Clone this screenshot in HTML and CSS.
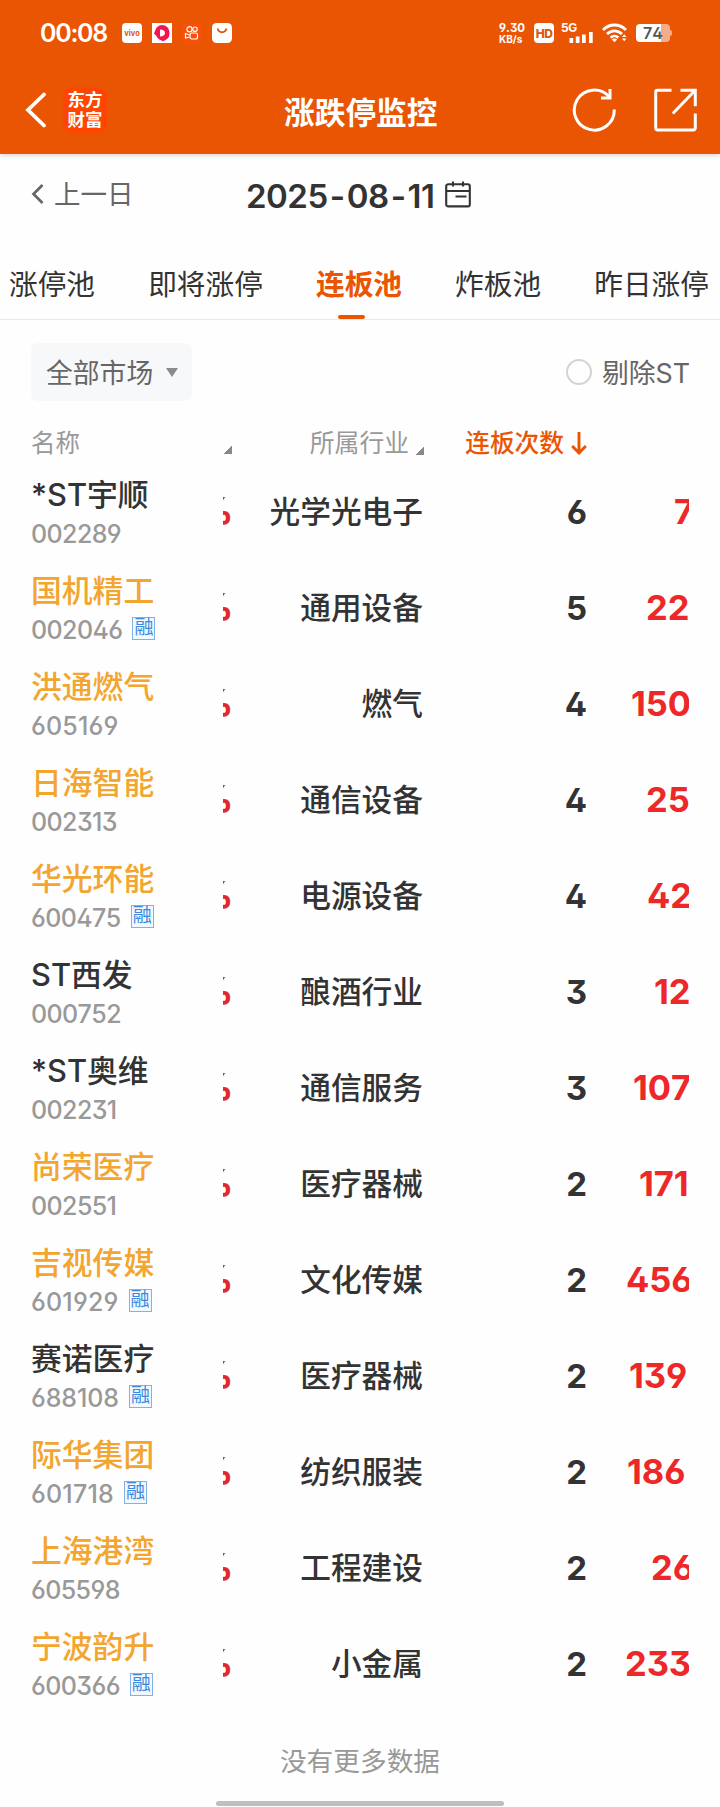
FILE: index.html
```html
<!DOCTYPE html>
<html lang="zh-CN">
<head>
<meta charset="utf-8">
<title>涨跌停监控</title>
<link rel="stylesheet" href="styles.css">
</head>
<body>
<header class="top">
  <div class="status">
    <span class="clock">00:08</span>
    <span class="chip vivo">vivo</span>
    <svg class="app" viewBox="0 0 20 20"><path fill="#fff" d="M0 0h20v20H0z"/><path fill="#f5144e" d="M10 2a8 8 0 0 1 3 15.200L10.500 18.500 10 17.500A8 8 0 0 1 4.500 13L2 10.500 3 8A8 8 0 0 1 10 2z"/><path fill="#fff" d="M8 6.500c3 0 5 1.500 5 3.500s-2 3.500-5 3.500z"/></svg>
    <svg class="app" viewBox="0 0 20 20"><rect width="20" height="20" rx="4" fill="#f94f08"/><g fill="none" stroke="#fff" stroke-width="1.200"><circle cx="7.500" cy="6.200" r="2.600"/><circle cx="13" cy="6.200" r="2.200"/><rect x="8" y="10" width="7.500" height="6" rx="2"/><path d="M7.500 12 3.500 10.500v4.500L7.500 14"/></g></svg>
    <svg class="app" viewBox="0 0 20 20"><rect width="20" height="20" rx="4.500" fill="#fff"/><path d="M5.500 5.500c1.500 5 7.500 5 9 0" fill="none" stroke="#d9570f" stroke-width="1.800"/></svg>
    <span class="speed"><span>9.30</span><span>KB/s</span></span>
    <span class="chip hd">HD</span>
    <span class="signal"><span class="net">5G</span><svg width="33" height="20" viewBox="0 0 33 20"><path fill="#fff" d="M8.500 15h3.700v5H8.500zM14.800 13.500h3.700V20h-3.700zM21 11.500h3.700V20H21zM28 9h3.700v11H28z"/></svg></span>
    <svg class="wifi" width="25" height="20" viewBox="0 0 25 20"><g fill="none" stroke="#fff" stroke-width="2.800"><path d="M1 7c6.500-6.700 16.500-6.700 23 0"/><path d="M5 11c4.500-4.300 10.500-4.300 15 0"/><path d="M8.700 14.600c2.200-2 5.400-2 7.600 0"/></g><path fill="#fff" d="m9.800 16.500 2.700 2.700 2.700-2.700q-2.700-2-5.400 0zM20 14l2.200-2.700 2.200 2.700zM20 15.500h4.400l-2.200 2.700z"/></svg>
    <span class="battery"><span class="cell">74</span></span>
  </div>
  <div class="nav">
    <svg class="back" width="22" height="36" viewBox="0 0 22 36"><path d="M20 2.500 4 18 20 33.500" fill="none" stroke="#fff" stroke-width="3.800" stroke-linecap="round"/></svg>
    <div class="brand"><span>东方</span><span>财富</span></div>
    <h1 class="title">涨跌停监控</h1>
    <svg class="refresh" width="44" height="44" viewBox="0 0 44 44"><path d="M42.300 21.500A20 20 0 1 1 37 8.500" fill="none" stroke="#fff" stroke-width="3"/><path d="M38 1v9h-9" fill="none" stroke="#fff" stroke-width="3"/></svg>
    <svg class="share" width="44" height="44" viewBox="0 0 44 44"><path d="M17.500 2.300H3.500a1.800 1.800 0 0 0-1.800 1.800v36a1.800 1.800 0 0 0 1.800 1.800h36a1.800 1.800 0 0 0 1.800-1.800V25.500M26.500 2.300h14.800v16M41 2.500 18.800 25.500" fill="none" stroke="#fff" stroke-width="3"/></svg>
  </div>
</header>

<div class="datebar">
  <span class="prev"><svg width="13" height="20" viewBox="0 0 13 20"><path d="M11.500 1 2.500 10l9 9" fill="none" stroke="#666" stroke-width="2.700"/></svg>上一日</span>
  <span class="date">2025<i>-</i>08<i>-</i>11</span>
  <svg class="cal" width="26" height="27" viewBox="0 0 26 27"><g fill="none" stroke="#333" stroke-width="2.100"><rect x="1.200" y="3.200" width="23.600" height="22.200" rx="2"/><path d="M1 10h24M10.500 15.500h11"/><path d="M8 .5v5M18 .5v5"/></g></svg>
</div>

<nav class="tabs">
  <span class="tab">涨停池</span>
  <span class="tab">即将涨停</span>
  <span class="tab active">连板池</span>
  <span class="tab">炸板池</span>
  <span class="tab">昨日涨停</span>
</nav>

<div class="filters">
  <span class="market"><span>全部市场</span><svg width="12" height="9" viewBox="0 0 12 9"><path d="M0 0h12L6 9z" fill="#8b8b8b"/></svg></span>
  <span class="exclude"><span class="radio"></span><span>剔除ST</span></span>
</div>

<main>
  <div class="row head">
    <span>名称</span>
    <span class="sort"></span>
    <span class="ind">所属行业<span class="sort"></span></span>
    <span class="cnt">连板次数<svg width="16" height="23" viewBox="0 0 16 23"><path d="M8 0v20M1.200 14 8 21l6.800-7" fill="none" stroke="#ea5504" stroke-width="2.900"/></svg></span>
  </div>
  <div class="row"><div class="stock"><b>*ST宇顺</b><span class="code">002289</span></div><span class="pct"><i>%</i></span><span class="ind">光学光电子</span><span class="cnt">6</span><span class="amt" style="padding-left:88px">7</span></div>
  <div class="row"><div class="stock hot"><b>国机精工</b><span class="code">002046<em>融</em></span></div><span class="pct"><i>%</i></span><span class="ind">通用设备</span><span class="cnt">5</span><span class="amt" style="padding-left:60px">22</span></div>
  <div class="row"><div class="stock hot"><b>洪通燃气</b><span class="code wide">605169</span></div><span class="pct"><i>%</i></span><span class="ind">燃气</span><span class="cnt">4</span><span class="amt" style="padding-left:45px">150</span></div>
  <div class="row"><div class="stock hot"><b>日海智能</b><span class="code">002313</span></div><span class="pct"><i>%</i></span><span class="ind">通信设备</span><span class="cnt">4</span><span class="amt" style="padding-left:60px">25</span></div>
  <div class="row"><div class="stock hot"><b>华光环能</b><span class="code">600475<em>融</em></span></div><span class="pct"><i>%</i></span><span class="ind">电源设备</span><span class="cnt">4</span><span class="amt" style="padding-left:61px">42</span></div>
  <div class="row"><div class="stock"><b>ST西发</b><span class="code">000752</span></div><span class="pct"><i>%</i></span><span class="ind">酿酒行业</span><span class="cnt">3</span><span class="amt" style="padding-left:68px">12</span></div>
  <div class="row"><div class="stock"><b>*ST奥维</b><span class="code">002231</span></div><span class="pct"><i>%</i></span><span class="ind">通信服务</span><span class="cnt">3</span><span class="amt" style="padding-left:47px">107</span></div>
  <div class="row"><div class="stock hot"><b>尚荣医疗</b><span class="code">002551</span></div><span class="pct"><i>%</i></span><span class="ind">医疗器械</span><span class="cnt">2</span><span class="amt" style="padding-left:53px">171</span></div>
  <div class="row"><div class="stock hot"><b>吉视传媒</b><span class="code wide">601929<em>融</em></span></div><span class="pct"><i>%</i></span><span class="ind">文化传媒</span><span class="cnt">2</span><span class="amt" style="padding-left:40px">456</span></div>
  <div class="row"><div class="stock"><b>赛诺医疗</b><span class="code mid">688108<em>融</em></span></div><span class="pct"><i>%</i></span><span class="ind">医疗器械</span><span class="cnt">2</span><span class="amt" style="padding-left:43px">139</span></div>
  <div class="row"><div class="stock hot"><b>际华集团</b><span class="code wide">601718<em>融</em></span></div><span class="pct"><i>%</i></span><span class="ind">纺织服装</span><span class="cnt">2</span><span class="amt" style="padding-left:41px">186</span></div>
  <div class="row"><div class="stock hot"><b>上海港湾</b><span class="code">605598</span></div><span class="pct"><i>%</i></span><span class="ind">工程建设</span><span class="cnt">2</span><span class="amt" style="padding-left:65px">26</span></div>
  <div class="row"><div class="stock hot"><b>宁波韵升</b><span class="code">600366<em>融</em></span></div><span class="pct"><i>%</i></span><span class="ind">小金属</span><span class="cnt">2</span><span class="amt" style="padding-left:39px">233</span></div>
</main>

<footer class="end">没有更多数据<span class="home"></span></footer>
</body>
</html>
```

FILE: styles.css
```css
* { box-sizing: border-box; }
body {
  margin: 0;
  width: 720px;
  height: 1807px;
  overflow: hidden;
  display: flex;
  flex-direction: column;
  background: #fefefe;
  color: #333;
  font-family: Inter, "Noto Sans CJK SC", sans-serif;
  font-feature-settings: "ss01";
  font-kerning: none;
  white-space: nowrap;
}
i, em { font-style: normal; }
svg { display: block; flex: none; }

/* header */
.top {
  height: 154px;
  flex: none;
  background: #ea5504;
  color: #fff;
  box-shadow: 0 1px 5px rgba(0, 0, 0, .2);
}
.status { height: 66px; display: flex; align-items: center; padding-left: 40px; }
.clock { width: 82px; font-size: 25px; font-weight: 600; letter-spacing: -1.300px; }
.chip {
  width: 20px; height: 20px; border-radius: 4px;
  display: flex; align-items: center; justify-content: center;
  background: #fff; color: #d9570f;
}
.vivo { font-size: 7.500px; font-weight: 700; }
.app { width: 20px; height: 20px; margin-left: 10px; }
.speed {
  margin-left: 267px; width: 28px; height: 21px;
  display: flex; flex-direction: column; justify-content: space-between;
  font-size: 11.500px; line-height: 10px; font-weight: 700;
}
.speed span + span { font-size: 10px; }
.hd { margin-left: 7px; font-size: 12px; font-weight: 800; letter-spacing: -.5px; }
.signal { margin-left: 7px; width: 33px; height: 20px; position: relative; }
.net { position: absolute; left: 0; top: 0; font-size: 12px; line-height: 10px; font-weight: 700; letter-spacing: -.5px; }
.wifi { margin-left: 8px; }
.battery {
  margin-left: 9px; width: 34px; height: 18px; position: relative; border-radius: 4px;
  background: linear-gradient(90deg, #fff 25px, #f5ad87 25px);
}
.battery::after {
  content: ""; position: absolute; right: -2px; top: 6px; width: 2px; height: 6px;
  background: #f5ad87; border-radius: 0 2px 2px 0;
}
.cell { display: block; padding-left: 7px; font-size: 16px; line-height: 19px; font-weight: 600; color: #555; }

.nav { height: 88px; display: flex; align-items: center; padding-left: 24px; }
.brand {
  width: 44px; height: 46px; margin-left: 17px; border-radius: 9px;
  display: flex; flex-direction: column; align-items: center; justify-content: center;
  background: #fe4502;
  font-size: 17.500px; line-height: 20px; font-weight: 700;
}
.title { margin: 5px 0 0 177px; width: 288px; font-size: 30.700px; line-height: 40px; font-weight: 700; }
.refresh { margin-left: 0; }
.share { margin-left: 38px; }

/* date */
.datebar { height: 80px; flex: none; display: flex; align-items: center; padding-left: 31px; }
.prev { width: 215px; display: flex; align-items: center; gap: 10px; color: #666; font-size: 26.500px; line-height: 40px; }
.date { width: 199px; padding-top: 3px; font-size: 33px; line-height: 40px; font-weight: 600; letter-spacing: -.5px; }
.date i { display: inline-block; width: 19px; text-align: center; }

/* tabs */
.tabs {
  height: 86px; flex: none; display: flex; justify-content: space-between;
  padding: 31px 11px 0 9px; border-bottom: 1px solid #e8e8e8;
  font-size: 28.700px; line-height: 40px;
}
.tab { position: relative; }
.active { color: #ea5504; font-weight: 700; }
.active::after {
  content: ""; position: absolute; left: 22px; bottom: 0;
  width: 27px; height: 4px; border-radius: 2px; background: #ea5504;
}

/* filters */
.filters {
  height: 103px; flex: none; display: flex; justify-content: space-between; align-items: flex-start;
  padding: 23px 30px 0 31px; color: #666; font-size: 26.800px;
}
.market {
  width: 161px; height: 58px; border-radius: 7px; background: #f7f8fa;
  display: flex; align-items: center; padding-left: 15px; gap: 13px;
}
.market span { padding-bottom: 2px; }
.exclude { height: 57px; display: flex; align-items: center; gap: 10px; }
.radio { width: 26px; height: 26px; border: 2px solid #d3d3d3; border-radius: 50%; }

/* table */
.row {
  height: 96px;
  display: grid;
  grid-template-columns: 192px 12px 188px 163px 103px;
  align-items: center;
  padding-left: 31px;
  line-height: 40px;
}
.head { height: 41px; align-content: start; color: #999; font-size: 24.500px; }
.head .ind { color: #999; font-size: 24.800px; font-weight: 400; padding-right: 14px; position: relative; }
.head .cnt {
  display: flex; justify-content: flex-end; align-items: center; gap: 7px;
  color: #ea5504; font-size: 24.700px; font-weight: 500; margin-right: -1px;
}
.sort { width: 8px; height: 8px; margin-top: 14px; margin-left: 1px; background: linear-gradient(135deg, transparent 50%, #888 50%); }
.ind .sort { position: absolute; right: -1px; top: 10px; }
.stock { display: flex; flex-direction: column; padding-top: 3px; }
.stock b { font-size: 30.800px; line-height: 40px; font-weight: 500; }
.hot b { color: #f2a52f; }
.code {
  display: flex; align-items: center; gap: 10px;
  color: #999; font-size: 25px; line-height: 38px; font-weight: 500; letter-spacing: -.6px;
}
.wide { letter-spacing: .2px; }
.mid { letter-spacing: -.1px; }
.code em {
  width: 23px; height: 23px; margin-top: -2px;
  border: 1px solid #7fb2e8; background: #f1f8ff; color: #3c8ade;
  font-size: 19px; line-height: 20px; text-align: center; letter-spacing: 0; font-weight: 400;
}
.pct {
  height: 40px; overflow: hidden; display: flex; justify-content: flex-end; padding-right: 2px;
  color: #e02a2a; font-size: 37px; line-height: 38px; font-weight: 800;
}
.ind { text-align: right; font-size: 30.700px; font-weight: 500; }
.cnt { text-align: right; font-size: 33px; font-weight: 700; margin-right: -1px; }
.amt { overflow: hidden; color: #ec2828; font-size: 34.500px; font-weight: 700; letter-spacing: -.1px; margin-right: 0; }

/* footer */
.end { position: relative; height: 95px; flex: none; padding-top: 29px; text-align: center; color: #999; font-size: 26.700px; line-height: 40px; }
.home { position: absolute; left: 216px; bottom: 1px; width: 288px; height: 5px; border-radius: 3px; background: #bfbfbf; }
```
